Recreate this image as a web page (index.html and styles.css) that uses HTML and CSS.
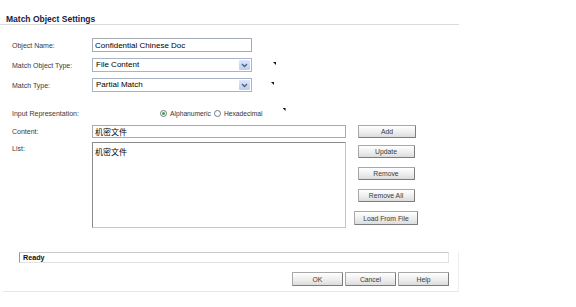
FILE: index.html
```html
<!DOCTYPE html>
<html lang="en">
<head>
    <meta charset="UTF-8">
    <title>Match Object Settings</title>
    <link rel="stylesheet" href="styles.css">
</head>
<body>
    <div class="dialog">
        <div class="dialog-title">Match Object Settings</div>

        <div class="fields">
            <div class="row">
                <label class="row-label">Object Name:</label>
                <input class="text-field" type="text" value="Confidential Chinese Doc">
            </div>
            <div class="row">
                <label class="row-label">Match Object Type:</label>
                <div class="select-box">
                    <span class="select-value">File Content</span>
                    <span class="select-arrow">
                        <svg width="7" height="5" viewBox="0 0 7 5"><path d="M1 1 L3.5 3.5 L6 1" fill="none" stroke="#4a5f86" stroke-width="1.3"/></svg>
                    </span>
                </div>
                <span class="mark mark-one"></span>
            </div>
            <div class="row">
                <label class="row-label">Match Type:</label>
                <div class="select-box">
                    <span class="select-value">Partial Match</span>
                    <span class="select-arrow">
                        <svg width="7" height="5" viewBox="0 0 7 5"><path d="M1 1 L3.5 3.5 L6 1" fill="none" stroke="#4a5f86" stroke-width="1.3"/></svg>
                    </span>
                </div>
                <span class="mark mark-two"></span>
            </div>
            <div class="row row-radio">
                <label class="row-label">Input Representation:</label>
                <div class="radio-group">
                    <span class="radio checked"></span><span class="radio-text">Alphanumeric</span>
                    <span class="radio"></span><span class="radio-text">Hexadecimal</span>
                </div>
                <span class="mark mark-three"></span>
            </div>
        </div>

        <div class="list-grid">
            <label class="row-label">Content:</label>
            <input class="text-field content-field" type="text" value="机密文件">
            <div class="side-cell">
                <button class="btn btn-add">Add</button>
            </div>

            <label class="row-label list-label">List:</label>
            <div class="list-box">机密文件</div>
            <div class="side-cell list-buttons">
                <button class="btn">Update</button>
                <button class="btn">Remove</button>
                <button class="btn">Remove All</button>
                <button class="btn btn-load">Load From File</button>
            </div>
        </div>

        <div class="bottom">
            <div class="status">Ready</div>
            <div class="actions">
                <button class="btn btn-action">OK</button>
                <button class="btn btn-action">Cancel</button>
                <button class="btn btn-action">Help</button>
            </div>
        </div>
    </div>
</body>
</html>
```

FILE: styles.css
```css
body {
    margin: 0;
    background-color: #fff;
    font-family: "Liberation Sans", Arial, sans-serif;
    font-size: 7px;
    color: #333;
}

.dialog {
    width: 459px;
}

.dialog-title {
    padding: 15px 0 0 6px;
    height: 9px;
    line-height: 9px;
    font-size: 8.5px;
    font-weight: bold;
    color: #1b2145;
    border-bottom: 1px solid #dcdcdc;
}

.fields {
    padding: 13px 0 0 12px;
}

.row {
    display: flex;
    align-items: center;
    height: 14px;
    margin-bottom: 6px;
}

.row-label {
    width: 80px;
    flex-shrink: 0;
    color: #3a3a3a;
}

.text-field {
    box-sizing: border-box;
    width: 160px;
    height: 14px;
    margin: 0;
    padding: 0 2px;
    border: 1px solid #a4abb3;
    font-family: "Liberation Sans", Arial, "Noto Sans CJK SC", sans-serif;
    font-size: 8px;
    color: #000;
    outline: none;
}

.select-box {
    box-sizing: border-box;
    display: flex;
    align-items: stretch;
    width: 160px;
    height: 14px;
    border: 1px solid #a9b5c6;
    font-size: 8px;
    color: #000;
}

.select-value {
    flex: 1;
    padding-left: 3px;
    line-height: 12px;
}

.select-arrow {
    display: flex;
    align-items: center;
    justify-content: center;
    width: 11px;
    margin: 1px;
    background: linear-gradient(#dce6fb, #bccdf0);
    border-radius: 1px;
}

.mark {
    width: 3px;
    height: 3px;
    background-color: #111;
    clip-path: polygon(0 0, 100% 0, 100% 100%);
    align-self: flex-start;
}

.mark-one {
    margin: 4px 0 0 21px;
}

.mark-two {
    margin: 4px 0 0 19px;
}

.row-radio {
    height: 12px;
    margin-top: 15px;
    margin-bottom: 0;
}

.radio-group {
    display: flex;
    align-items: center;
    margin-left: 68px;
    font-size: 6.7px;
    color: #333;
}

.radio {
    box-sizing: border-box;
    width: 7px;
    height: 7px;
    border: 1px solid #6f7b88;
    border-radius: 50%;
    background-color: #fff;
    margin-right: 3px;
    display: flex;
    align-items: center;
    justify-content: center;
}

.radio.checked::after {
    content: "";
    width: 3px;
    height: 3px;
    border-radius: 50%;
    background-color: #3aa43a;
}

.radio-text {
    margin-right: 3px;
}

.mark-three {
    margin: 1px 0 0 17px;
}

.list-grid {
    display: grid;
    grid-template-columns: 80px 254px 80px;
    grid-template-rows: 13px 86px;
    row-gap: 4px;
    padding: 6px 0 0 12px;
}

.list-grid .row-label {
    align-self: center;
}

.list-grid .list-label {
    align-self: start;
    margin-top: 3px;
}

.content-field {
    width: 254px;
    height: 13px;
}

.list-box {
    box-sizing: border-box;
    padding: 5px 2px;
    border: 1px solid #c9c6bd;
    border-top-color: #8a8a8a;
    border-left-color: #8a8a8a;
    font-family: "Liberation Sans", "Noto Sans CJK SC", sans-serif;
    font-size: 8px;
    line-height: 9px;
    color: #000;
}

.side-cell {
    display: flex;
    flex-direction: column;
    align-items: center;
}

.list-buttons {
    padding-top: 3px;
    gap: 9px;
}

.btn {
    box-sizing: border-box;
    height: 13px;
    width: 57px;
    margin: 0;
    padding: 0;
    border: 1px solid #7c7c7c;
    border-top-color: #a8a8a8;
    border-left-color: #a8a8a8;
    border-radius: 1px;
    background: linear-gradient(#ffffff, #ececec 60%, #dcdcdc);
    font-family: "Liberation Sans", Arial, sans-serif;
    font-size: 6.8px;
    color: #3a3a3a;
    cursor: pointer;
}

.btn-add {
    width: 58px;
    height: 14px;
    margin-left: 2px;
}

.btn-load {
    width: 64px;
    height: 14px;
}

.bottom {
    margin: 24px 0 0 3px;
    padding: 0 9px 5px 16px;
    width: 430px;
    border-bottom: 1px solid #e6e6e6;
    border-right: 1px solid #eeeeee;
}

.status {
    box-sizing: border-box;
    height: 11px;
    padding-left: 3px;
    line-height: 10px;
    border: 1px solid #e2e2e2;
    border-top-color: #c8c8c8;
    border-left-color: #9a9a9a;
    font-weight: bold;
    font-size: 7.2px;
    color: #111;
}

.actions {
    display: flex;
    justify-content: flex-end;
    gap: 2px;
    margin-top: 9px;
}

.btn-action {
    width: 51px;
    height: 14px;
}
```
